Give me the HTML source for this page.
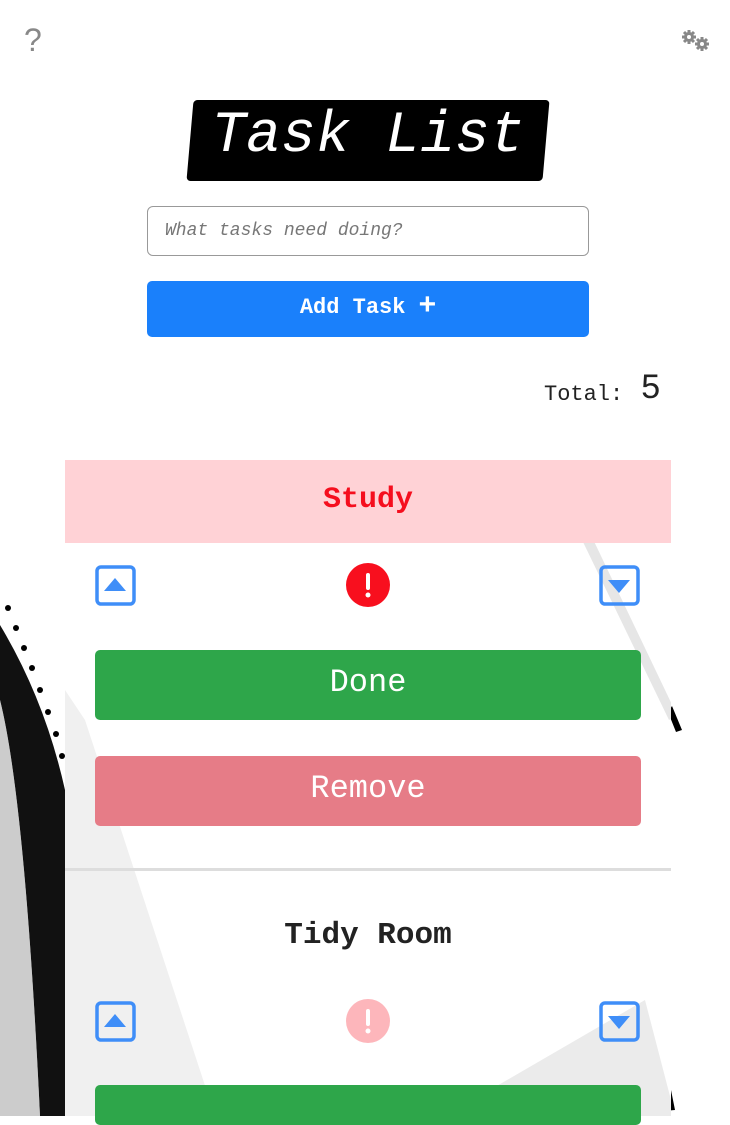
<!DOCTYPE html>
<html><head><style>
body{margin:0;width:730px;height:1116px;background:#fff;position:relative;overflow:hidden;font-family:"Liberation Mono",monospace}
.abs{position:absolute}
.btn{position:absolute;left:95px;width:546px;border-radius:5px;color:#fff;text-align:center;font-size:32px}
</style></head><body>
<svg class="abs" style="left:0;top:0" width="730" height="1116">
<path d="M0 625 Q45 700 65 790 L65 1116 L40 1116 Q25 800 0 700 Z" fill="#111"/>
<path d="M0 700 Q25 800 40 1116 L0 1116 Z" fill="#aaa" opacity=".6"/>
<g fill="#000"><circle cx="8" cy="608" r="3"/><circle cx="16" cy="628" r="3"/><circle cx="24" cy="648" r="3"/><circle cx="32" cy="668" r="3"/><circle cx="40" cy="690" r="3"/><circle cx="48" cy="712" r="3"/><circle cx="56" cy="734" r="3"/><circle cx="62" cy="756" r="3"/></g>
<path d="M65 1108 L210 1108 L215 1116 L65 1116Z" fill="#000"/>
<path d="M671 1090 L675 1110 L600 1116 L671 1116Z" fill="#000"/>
<path d="M672 706 L682 730 L676 732 L668 712Z" fill="#000"/>
</svg>
<div class="abs" style="left:65px;top:460px;width:606px;height:656px;background:#fff"></div>
<svg class="abs" style="left:65px;top:460px" width="606" height="656">
<path d="M0 230 L20 260 L150 656 L0 656Z" fill="#f0f0f0"/>
<path d="M505 55 L515 52 L612 255 L604 260Z" fill="#e6e6e6"/>
<path d="M380 656 L580 540 L606 640 L606 656Z" fill="#ebebeb"/>
</svg>
<div class="abs" style="left:24px;top:22px;font:32px 'Liberation Sans',sans-serif;color:#888">?</div>
<svg class="abs" style="left:680px;top:28px" width="34" height="26" fill="#888">
<g transform="translate(9,9)"><circle r="5"/><g stroke="#888" stroke-width="3"><line x1="0" y1="-7" x2="0" y2="7"/><line x1="-7" y1="0" x2="7" y2="0"/><line x1="-5" y1="-5" x2="5" y2="5"/><line x1="-5" y1="5" x2="5" y2="-5"/></g><circle r="2" fill="#fff"/></g>
<g transform="translate(22,16)"><circle r="5"/><g stroke="#888" stroke-width="3"><line x1="0" y1="-7" x2="0" y2="7"/><line x1="-7" y1="0" x2="7" y2="0"/><line x1="-5" y1="-5" x2="5" y2="5"/><line x1="-5" y1="5" x2="5" y2="-5"/></g><circle r="2" fill="#fff"/></g>
</svg>
<div class="abs" style="left:190px;top:100px;width:356px;height:81px;background:#000;border-radius:4px;transform:skewX(-5deg)"></div>
<div class="abs" style="left:185px;top:102px;width:366px;text-align:center;color:#fff;font:italic 58px 'Liberation Mono',monospace;line-height:70px">Task List</div>
<div class="abs" style="left:147px;top:206px;border:1px solid #999;border-radius:6px;font:italic 18px 'Liberation Mono';color:#777;line-height:48px;padding-left:17px;box-sizing:border-box;width:442px;height:50px">What tasks need doing?</div>
<div class="abs" style="left:147px;top:281px;width:442px;height:56px;background:#1a80fb;border-radius:5px;color:#fff;font:bold 22px 'Liberation Mono';text-align:center;line-height:54px">Add Task <span style="font:bold 30px 'Liberation Sans';vertical-align:-1px">+</span></div>
<div class="abs" style="left:544px;top:368px;font:22px 'Liberation Mono';color:#222">Total:<span style="font:34px 'Liberation Sans';vertical-align:2px;margin-left:18px">5</span></div>
<div class="abs" style="left:65px;top:460px;width:606px;height:83px;background:#ffd2d6;color:#f50e1e;font:bold 30px 'Liberation Mono';text-align:center;line-height:80px">Study</div>
<svg class="abs" style="left:95px;top:565px" width="42" height="42"><rect x="2" y="2" width="37" height="37" rx="4" fill="none" stroke="#3f8ef8" stroke-width="3.5"/><path d="M9 26 L20 13 L31 26Z" fill="#3f8ef8"/></svg>
<svg class="abs" style="left:599px;top:565px" width="42" height="42"><rect x="2" y="2" width="37" height="37" rx="4" fill="none" stroke="#3f8ef8" stroke-width="3.5"/><path d="M9 15 L31 15 L20 28Z" fill="#3f8ef8"/></svg>
<svg class="abs" style="left:346px;top:563px" width="46" height="46"><circle cx="22" cy="22" r="22" fill="#f80f1e"/><rect x="20" y="10" width="4" height="17" rx="2" fill="#fff"/><circle cx="22" cy="32" r="2.5" fill="#fff"/></svg>
<div class="btn" style="top:650px;height:70px;background:#2ea64a;line-height:66px">Done</div>
<div class="btn" style="top:756px;height:70px;background:#e67c87;line-height:66px">Remove</div>
<div class="abs" style="left:65px;top:868px;width:606px;height:3px;background:#ddd"></div>
<div class="abs" style="left:65px;top:918px;width:606px;text-align:center;font:bold 31px 'Liberation Mono';color:#222">Tidy Room</div>
<svg class="abs" style="left:95px;top:1001px" width="42" height="42"><rect x="2" y="2" width="37" height="37" rx="4" fill="none" stroke="#3f8ef8" stroke-width="3.5"/><path d="M9 26 L20 13 L31 26Z" fill="#3f8ef8"/></svg>
<svg class="abs" style="left:599px;top:1001px" width="42" height="42"><rect x="2" y="2" width="37" height="37" rx="4" fill="none" stroke="#3f8ef8" stroke-width="3.5"/><path d="M9 15 L31 15 L20 28Z" fill="#3f8ef8"/></svg>
<svg class="abs" style="left:346px;top:999px" width="46" height="46"><circle cx="22" cy="22" r="22" fill="#fdb6bb"/><rect x="20" y="10" width="4" height="17" rx="2" fill="#fff"/><circle cx="22" cy="32" r="2.5" fill="#fff"/></svg>
<div class="btn" style="top:1085px;height:40px;background:#2ea64a"></div>
</body></html>
